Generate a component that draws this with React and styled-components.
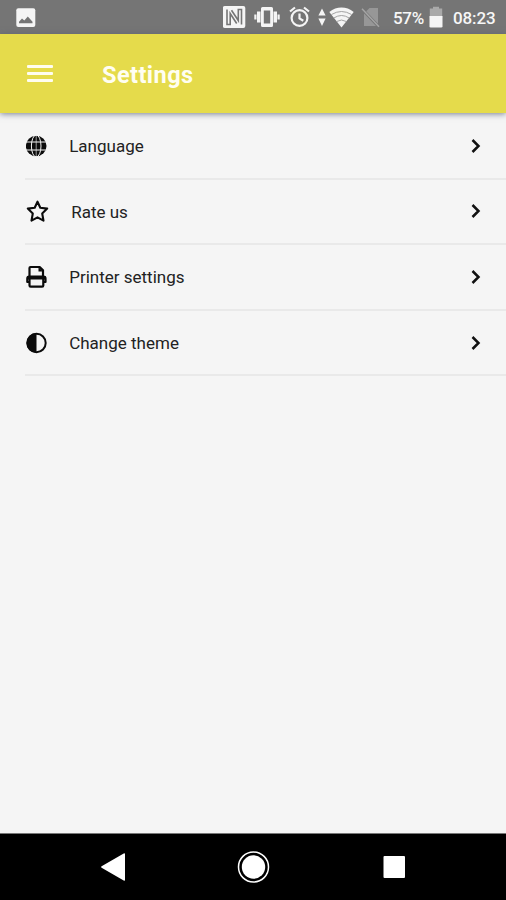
import styled, { createGlobalStyle } from "styled-components";

const GlobalStyle = createGlobalStyle`
  * {
    box-sizing: border-box;
  }
  body {
    margin: 0;
    background: #f5f5f5;
    font-family: Roboto, "Liberation Sans", sans-serif;
  }
`;

const Screen = styled.div`
  width: 506px;
  height: 900px;
  display: flex;
  flex-direction: column;
  background: #f5f5f5;
  overflow: hidden;
`;

const StatusBar = styled.div`
  height: 34px;
  flex: none;
  display: flex;
  align-items: center;
  padding: 0 11px 0 16px;
  background: #757575;
  color: #f7f7f7;
`;

const StatusIcon = styled.svg`
  display: block;
  flex: none;
  width: ${({ $w }) => $w}px;
  height: 22px;
  margin-left: ${({ $gap }) => $gap || 0}px;
  fill: #f5f5f5;
`;

const StatusText = styled.span`
  width: ${({ $w }) => $w}px;
  margin-left: ${({ $gap }) => $gap}px;
  font-size: 17px;
  line-height: 20px;
  font-weight: 500;
  letter-spacing: ${({ $spacing }) => $spacing || 0}px;
  white-space: nowrap;
  padding-top: 2px;
`;

const Spacer = styled.div`
  flex: 1;
`;

const Header = styled.header`
  height: 79px;
  flex: none;
  display: flex;
  align-items: center;
  padding: 2px 27px 0;
  background: #e5db4b;
  box-shadow: 0 1px 6px rgba(80, 90, 115, 0.75);
  z-index: 1;
`;

const MenuButton = styled.button`
  width: 26px;
  height: 17px;
  display: flex;
  flex-direction: column;
  justify-content: space-between;
  margin-top: -2px;
  padding: 0;
  border: none;
  background: none;
  cursor: pointer;
`;

const MenuLine = styled.span`
  width: 26px;
  height: 3px;
  border-radius: 1px;
  background: #fffdf0;
`;

const Title = styled.h1`
  margin: 0 0 0 49px;
  color: #fffef2;
  font-size: 23.5px;
  line-height: 28px;
  font-weight: 700;
  letter-spacing: 0.45px;
`;

const List = styled.ul`
  flex: 1;
  margin: 0;
  padding: 1px 0 0 25px;
  list-style: none;
`;

const Item = styled.li`
  height: 65.6px;
  display: flex;
  align-items: center;
  padding-right: 24px;
  border-bottom: 2px solid #e9e9e9;
  cursor: pointer;
`;

const ItemIcon = styled.svg`
  display: block;
  flex: none;
  width: ${({ $w }) => $w || 22}px;
  height: 24px;
  margin-left: 1px;
`;

const Label = styled.span`
  flex: 1;
  margin-left: 21.2px;
  padding-top: 0.6px;
  color: #222;
  font-size: 17px;
  line-height: 22px;
`;

const Chevron = styled.svg`
  display: block;
  width: 12px;
  height: 16px;
`;

const NavBar = styled.nav`
  height: 67px;
  flex: none;
  display: flex;
  align-items: center;
  justify-content: space-between;
  padding: 0 99px;
  border-top: 1px solid #777;
  background: #000;
`;

const NavIcon = styled.svg`
  display: block;
  width: 34px;
  height: 34px;
  fill: #fff;
`;

const GlobeIcon = () => (
  <ItemIcon viewBox="0 0 22 24">
    <circle cx="10.2" cy="12" r="10.300" fill="#0b0b0b" />
    <g fill="none" stroke="#f5f5f5" strokeWidth="1">
      <ellipse cx="10.200" cy="12" rx="4.800" ry="11" />
      <path d="M10.200 1v22" strokeWidth=".6" />
      <path d="M0 8h21M0 16h21" />
    </g>
  </ItemIcon>
);

const StarIcon = () => (
  <ItemIcon $w={24} viewBox="0 0 24 24">
    <path
      d="M11.500 2.700l2.800 6 6.900.9-5 4.900 1.300 7.100-6-3.200-6 3.200 1.300-7.100-5-4.900 6.900-.9z"
      fill="none"
      stroke="#0b0b0b"
      strokeWidth="2.100"
      strokeLinejoin="round"
    />
  </ItemIcon>
);

const PrinterIcon = () => (
  <ItemIcon viewBox="0 0 22 24">
    <g fill="none" stroke="#0b0b0b" strokeWidth="2.200" strokeLinejoin="round">
      <path d="M3.500 11V3q0-1 1-1h9.200l3.300 3.300V11" />
      <path d="M3.500 17H1.300v-3.500q0-2 2-2h14.200q2 0 2 2V17h-2.200" />
      <path d="M3.500 14v6.500q0 1.200 1.200 1.200h11.400q1.200 0 1.200-1.200V14" />
    </g>
    <path d="M1.500 11h18v3.500h-18zM12.500 2v4.500h4.500z" fill="#0b0b0b" />
  </ItemIcon>
);

const ContrastIcon = () => (
  <ItemIcon viewBox="0 0 22 24">
    <circle cx="10.500" cy="12" r="9.200" fill="none" stroke="#0b0b0b" strokeWidth="2" />
    <path d="M10.500 2a10 10 0 0 0 0 20z" fill="#0b0b0b" />
  </ItemIcon>
);

const items = [
  { label: "Language", Icon: GlobeIcon },
  { label: "Rate us", Icon: StarIcon },
  { label: "Printer settings", Icon: PrinterIcon },
  { label: "Change theme", Icon: ContrastIcon },
];

const StatusIcons = () => (
  <>
    {/* NFC */}
    <StatusIcon $w={24} viewBox="0 0 24 22">
      <path d="M1.800 0h18.500q2 0 2 2v18q0 2-2 2H1.800q-2 0-2-2V2q0-2 2-2z" />
      <path
        d="M4 3.500v15h3.200V7.500l6.500 10M18.500 18.500v-15h-3.200V14.500L8.500 4.200"
        fill="none"
        stroke="#757575"
        strokeWidth="1.600"
      />
    </StatusIcon>
    {/* vibrate */}
    <StatusIcon $w={26} $gap={7} viewBox="0 0 26 22">
      <path
        fillRule="evenodd"
        d="M8.500 1h9q1.500 0 1.500 1.500v17q0 1.500-1.500 1.500h-9Q7 21 7 19.500v-17Q7 1 8.500 1zM9.800 4.500v13h6.400v-13z"
      />
      <path d="M3 5.500h3.500v11H3zM.3 8.500h2.200v5H.3zM19.500 5.500H23v11h-3.500zM23.500 8.500h2.200v5h-2.200z" />
    </StatusIcon>
    {/* alarm */}
    <StatusIcon $w={22} $gap={9} viewBox="0 0 22 22">
      <circle cx="10.500" cy="12" r="7.900" fill="none" stroke="#f5f5f5" strokeWidth="2.200" />
      <path
        d="M10.500 7.500v5l3.800 2.300M1 5.500l5-4M20 5.500l-5-4"
        fill="none"
        stroke="#f5f5f5"
        strokeWidth="2.200"
      />
    </StatusIcon>
    <StatusIcon $w={8} $gap={7} viewBox="0 0 8 22">
      <path d="M4 2.500l3.600 7H.4zM4 20L.4 12.500h7.200z" />
    </StatusIcon>
    {/* wifi */}
    <StatusIcon $w={26} $gap={3} viewBox="0 0 26 22">
      <path d="M12.500 21.500L.3 6Q6 1.600 12.500 1.600T24.700 6z" />
      <path
        d="M2.500 8.500Q12.500 2.500 22.500 8.500M4.800 12Q12.500 7 20.200 12M7.700 15.500Q12.500 12.500 17.300 15.500"
        fill="none"
        stroke="#999"
        strokeWidth=".9"
      />
    </StatusIcon>
    {/* no sim */}
    <StatusIcon $w={20} $gap={6} viewBox="0 0 20 22">
      <path d="M8.500 2H17v18H3V7.500z" fill="#979797" />
      <path d="M1.500 3.500l17 18" stroke="#757575" strokeWidth="3" />
      <path d="M1 2.800l17 18" stroke="#a5a5a5" strokeWidth="1.500" />
    </StatusIcon>
  </>
);

const App = () => {
  return (
    <>
      <GlobalStyle />
      <Screen>
        <StatusBar>
          <StatusIcon $w={20} viewBox="0 0 20 22">
            <rect x=".3" y="2.200" width="19" height="18.800" rx="2" />
            <path
              d="M3 17.300v-1.500l3-3.300 2.300 2 3.500-4 2.700 3 2 2.300v1.500z"
              fill="#757575"
            />
          </StatusIcon>
          <Spacer />
          <StatusIcons />
          <StatusText $w={31} $gap={12} $spacing={-0.3}>
            57%
          </StatusText>
          <StatusIcon $w={14} $gap={5} viewBox="0 0 14 22">
            <path d="M4 2.500V.8h6v1.700h3.200V12H.8V2.500z" fill="#a9a9a9" />
            <path d="M.5 10h13v10.200q0 1.300-1.300 1.300H1.800q-1.300 0-1.300-1.300z" />
          </StatusIcon>
          <StatusText $w={42} $gap={10} $spacing={-0.1}>
            08:23
          </StatusText>
        </StatusBar>

        <Header>
          <MenuButton aria-label="Menu">
            <MenuLine />
            <MenuLine />
            <MenuLine />
          </MenuButton>
          <Title>Settings</Title>
        </Header>

        <List>
          {items.map(({ label, Icon }) => (
            <Item key={label}>
              <Icon />
              <Label>{label}</Label>
              <Chevron viewBox="0 0 12 16">
                <path d="M2.500 2l6 6-6 6" fill="none" stroke="#111" strokeWidth="2.500" />
              </Chevron>
            </Item>
          ))}
        </List>

        <NavBar>
          <NavIcon viewBox="0 0 34 34">
            <path d="M2.600 16.200L24.700 3.500q1.300-.7 1.300.8v25.400q0 1.500-1.300.8L2.600 17.800q-1.200-.8 0-1.600z" />
          </NavIcon>
          <NavIcon viewBox="0 0 34 34">
            <circle cx="17.500" cy="17" r="15" fill="none" stroke="#fff" strokeWidth="1.500" />
            <circle cx="17.500" cy="17" r="11.700" />
          </NavIcon>
          <NavIcon viewBox="0 0 34 34">
            <rect x="10.500" y="6" width="21.500" height="22" rx="1" />
          </NavIcon>
        </NavBar>
      </Screen>
    </>
  );
};

export default App;
